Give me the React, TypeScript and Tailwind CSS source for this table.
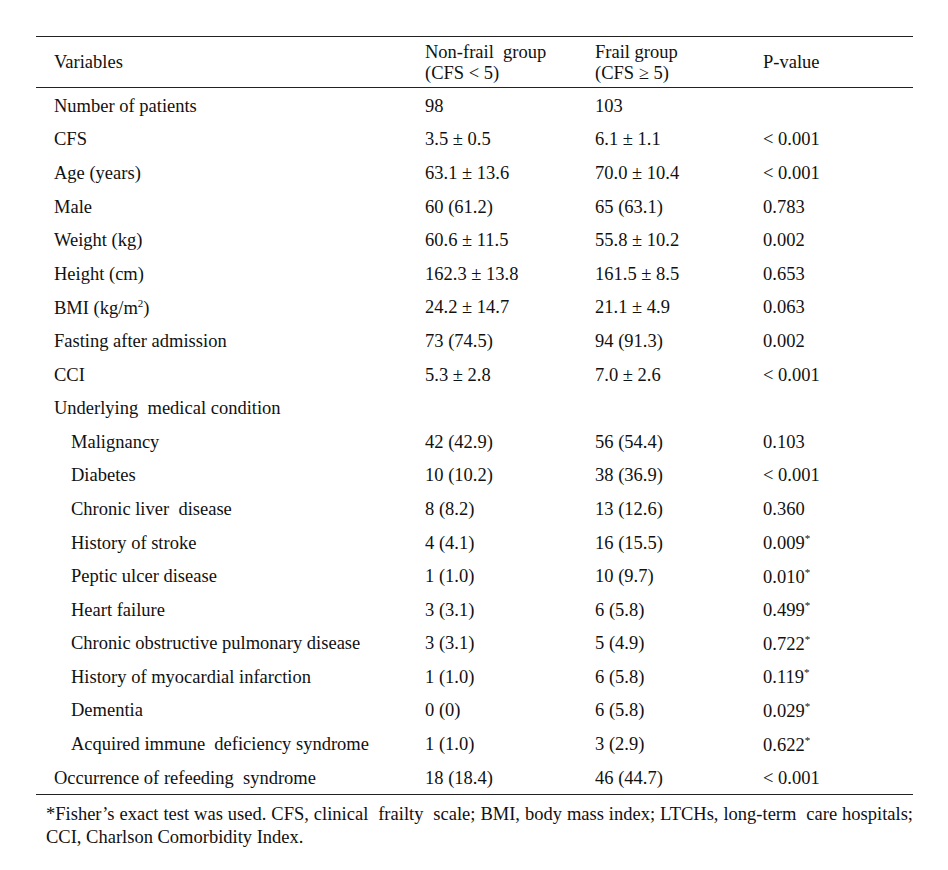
import type { ReactNode } from "react";

interface Row {
  label: ReactNode;
  nonFrail: string;
  frail: string;
  p: string;
  fisher?: boolean;
  indent?: boolean;
}

const rows: Row[] = [
  { label: "Number of patients", nonFrail: "98", frail: "103", p: "" },
  { label: "CFS", nonFrail: "3.5 ± 0.5", frail: "6.1 ± 1.1", p: "< 0.001" },
  { label: "Age (years)", nonFrail: "63.1 ± 13.6", frail: "70.0 ± 10.4", p: "< 0.001" },
  { label: "Male", nonFrail: "60 (61.2)", frail: "65 (63.1)", p: "0.783" },
  { label: "Weight (kg)", nonFrail: "60.6 ± 11.5", frail: "55.8 ± 10.2", p: "0.002" },
  { label: "Height (cm)", nonFrail: "162.3 ± 13.8", frail: "161.5 ± 8.5", p: "0.653" },
  {
    label: (
      <>
        BMI (kg/m<span className="text-[11px] align-[7px] leading-none">2</span>)
      </>
    ),
    nonFrail: "24.2 ± 14.7",
    frail: "21.1 ± 4.9",
    p: "0.063",
  },
  { label: "Fasting after admission", nonFrail: "73 (74.5)", frail: "94 (91.3)", p: "0.002" },
  { label: "CCI", nonFrail: "5.3 ± 2.8", frail: "7.0 ± 2.6", p: "< 0.001" },
  { label: "Underlying  medical condition", nonFrail: "", frail: "", p: "" },
  { label: "Malignancy", nonFrail: "42 (42.9)", frail: "56 (54.4)", p: "0.103", indent: true },
  { label: "Diabetes", nonFrail: "10 (10.2)", frail: "38 (36.9)", p: "< 0.001", indent: true },
  { label: "Chronic liver  disease", nonFrail: "8 (8.2)", frail: "13 (12.6)", p: "0.360", indent: true },
  { label: "History of stroke", nonFrail: "4 (4.1)", frail: "16 (15.5)", p: "0.009", fisher: true, indent: true },
  { label: "Peptic ulcer disease", nonFrail: "1 (1.0)", frail: "10 (9.7)", p: "0.010", fisher: true, indent: true },
  { label: "Heart failure", nonFrail: "3 (3.1)", frail: "6 (5.8)", p: "0.499", fisher: true, indent: true },
  { label: "Chronic obstructive pulmonary disease", nonFrail: "3 (3.1)", frail: "5 (4.9)", p: "0.722", fisher: true, indent: true },
  { label: "History of myocardial infarction", nonFrail: "1 (1.0)", frail: "6 (5.8)", p: "0.119", fisher: true, indent: true },
  { label: "Dementia", nonFrail: "0 (0)", frail: "6 (5.8)", p: "0.029", fisher: true, indent: true },
  { label: "Acquired immune  deficiency syndrome", nonFrail: "1 (1.0)", frail: "3 (2.9)", p: "0.622", fisher: true, indent: true },
  { label: "Occurrence of refeeding  syndrome", nonFrail: "18 (18.4)", frail: "46 (44.7)", p: "< 0.001" },
];

const grid = "grid grid-cols-[389px_170px_168px_1fr] items-center";

export default function App() {
  return (
    <div className="min-h-[870px] bg-white text-[#111] font-['Liberation_Serif',serif] text-[18.5px] leading-[18px] pl-[36px] pt-[36px]">
      <div className="w-[877px]">
        <div className={`${grid} border-t-[1.5px] border-b-[1.5px] border-[#222] h-[52px] leading-[21px]`}>
          <div className="pl-[18px]">Variables</div>
          <div className="pt-[1px]">
            Non-frail&nbsp; group
            <br />
            (CFS &lt; 5)
          </div>
          <div className="pt-[1px]">
            Frail group
            <br />
            (CFS ≥ 5)
          </div>
          <div>P-value</div>
        </div>
        <div className="border-b-[1.5px] border-[#222] pt-[1px]">
          {rows.map((r, i) => (
            <div key={i} className={`${grid} h-[33.6px]`}>
              <div className={`${r.indent ? "pl-[35px]" : "pl-[18px]"} whitespace-pre`}>{r.label}</div>
              <div>{r.nonFrail}</div>
              <div>{r.frail}</div>
              <div>
                {r.p}
                {r.fisher && <span className="text-[11px] align-[7px] leading-none">*</span>}
              </div>
            </div>
          ))}
        </div>
        <p className="mt-[8px] pl-[10px] leading-[23px] text-justify">
          *Fisher’s exact test was used. CFS, clinical&nbsp; frailty&nbsp; scale; BMI, body mass index; LTCHs, long-term&nbsp; care hospitals; CCI, Charlson Comorbidity Index.
        </p>
      </div>
    </div>
  );
}
